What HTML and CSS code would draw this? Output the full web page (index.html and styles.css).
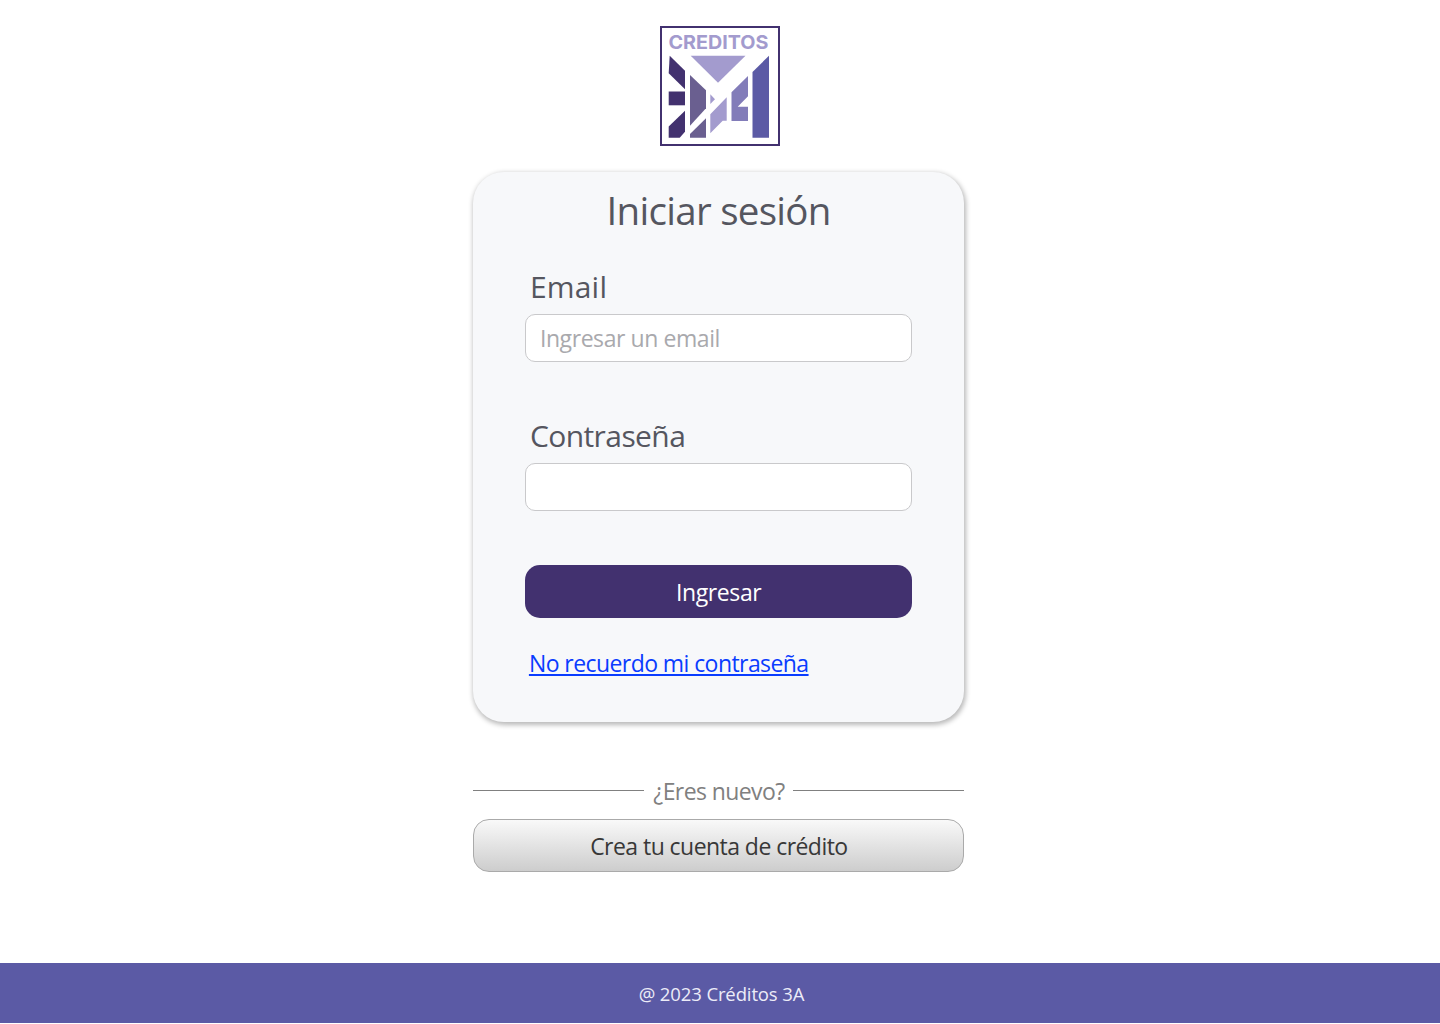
FILE: index.html
```html
<!DOCTYPE html>
<html lang="es">
<head>
<meta charset="utf-8">
<title>Créditos 3A – Iniciar sesión</title>
<link rel="stylesheet" href="styles.css">
</head>
<body>
<main class="main">
  <svg class="logo" viewBox="0 0 120 120" role="img" aria-label="Creditos 3A">
    <rect x="1" y="1" width="118" height="118" fill="#fff" stroke="#42316f" stroke-width="2"/>
    <text class="logo-text" x="8.5" y="22.7" textLength="100" lengthAdjust="spacingAndGlyphs">CREDITOS</text>
    <g fill="#42316f">
      <path d="M9.7 29.7 25 44.7V63.3L8.7 47.3Z"/>
      <path d="M8.7 65.5H25V79.3H8.7Z"/>
      <path d="M25 84.7V105.7L19.7 111.7H8.7V100.5Z"/>
    </g>
    <g fill="#6a5f90">
      <path d="M30 49 46 64.3V82.3L30 99.7Z"/>
      <path d="M46 92.3V111.7H30V108Z"/>
    </g>
    <g fill="#a39bce">
      <path d="M30.7 29.7H85.5L58 56.7Z"/>
      <path d="M50.3 68.3 55 73.3 50.3 78Z"/>
      <path d="M66.7 71.3V94.7H62.7L50.3 107.3V88.3Z"/>
    </g>
    <path fill="#827cb9" d="M88 50V70.3L77.7 80.7H88V95H71.5V66.3Z"/>
    <path fill="#5b5aa5" d="M109 29.7V111.7H92.5V46Z"/>
  </svg>

  <form class="card">
    <h1 class="title"><span>Iniciar sesión</span></h1>
    <label class="label label-email" for="email">Email</label>
    <input class="input" id="email" type="email" placeholder="Ingresar un email">
    <label class="label label-password" for="password">Contraseña</label>
    <input class="input" id="password" type="password">
    <button class="submit" type="button">Ingresar</button>
    <a class="forgot" href="#">No recuerdo mi contraseña</a>
  </form>

  <div class="divider"><span class="divider-text">¿Eres nuevo?</span></div>
  <button class="create" type="button">Crea tu cuenta de crédito</button>
</main>
<footer class="footer"><span>@ 2023 Créditos 3A</span></footer>
</body>
</html>
```
FILE: styles.css
```css
* { box-sizing: border-box; }

body {
  margin: 0;
  height: 1023px;
  display: flex;
  flex-direction: column;
  background: #fff;
  font-family: "Open Sans", "Noto Sans", sans-serif;
}

.main {
  flex: 1;
  width: 491px;
  margin-left: 473.4px;
  padding-top: 26px;
  display: flex;
  flex-direction: column;
}

.logo {
  width: 120px;
  height: 120px;
  margin-left: 186.6px;
  flex: none;
}

.logo-text {
  font: 700 19.2px Inter, sans-serif;
  fill: #a39bce;
}

.card {
  height: 550px;
  margin-top: 26px;
  padding: 11px 52px 0 51.5px;
  display: flex;
  flex-direction: column;
  flex: none;
  background: #f7f8fa;
  border-radius: 31px;
  box-shadow: 1px 2px 5px 1px rgba(0, 0, 0, .28);
}

.title {
  margin: 0;
  height: 54px;
  line-height: 54px;
  text-align: center;
  font-size: 38.5px;
  font-weight: 400;
  letter-spacing: -.72px;
  color: #55565f;
}

.label {
  height: 40px;
  line-height: 40px;
  padding-left: 5px;
  font-size: 30px;
  color: #55565f;
}

.label-email { margin-top: 30px; letter-spacing: .2px; }

.input {
  width: 387.5px;
  height: 48px;
  margin-top: 7px;
  padding: 0 14px;
  flex: none;
  font-family: inherit;
  font-size: 23px;
  letter-spacing: -.42px;
  color: #55565f;
  background: #fff;
  border: 1px solid #c9c9cb;
  border-radius: 10px;
}

.label-password { margin-top: 54px; letter-spacing: -.58px; }
.input::placeholder { color: #a9a9ad; opacity: 1; }

.submit {
  height: 53px;
  margin-top: 54px;
  padding: 0;
  border: 0;
  border-radius: 15px;
  background: #42316f;
  color: #fff;
  font-family: inherit;
  font-size: 23px;
  letter-spacing: -.4px;
}

.forgot {
  align-self: flex-start;
  margin: 28px 0 0 4px;
  line-height: 34px;
  font-size: 23px;
  letter-spacing: -.57px;
  color: #0a3cff;
  text-decoration-thickness: 1.5px;
  text-underline-offset: 2px;
}

.divider {
  height: 33px;
  margin-top: 52px;
  display: flex;
  align-items: center;
  gap: 9px;
  font-size: 23px;
  line-height: 34px;
  letter-spacing: -.6px;
  color: #808080;
}

.divider::before,
.divider::after {
  content: "";
  flex: 1;
  height: 1px;
  background: #808080;
}

.create {
  height: 53px;
  margin-top: 12px;
  padding: 0;
  border: 1px solid #aaa;
  border-radius: 16px;
  background: linear-gradient(#f9f9f9, #cdcdcd);
  color: #383838;
  font-family: inherit;
  font-size: 23px;
  letter-spacing: -.55px;
}

.footer {
  height: 60px;
  padding-left: 3px;
  display: flex;
  align-items: center;
  justify-content: center;
  background: #5b5aa5;
  color: #ececf8;
  font-size: 18.5px;
  letter-spacing: -.12px;
}
```
